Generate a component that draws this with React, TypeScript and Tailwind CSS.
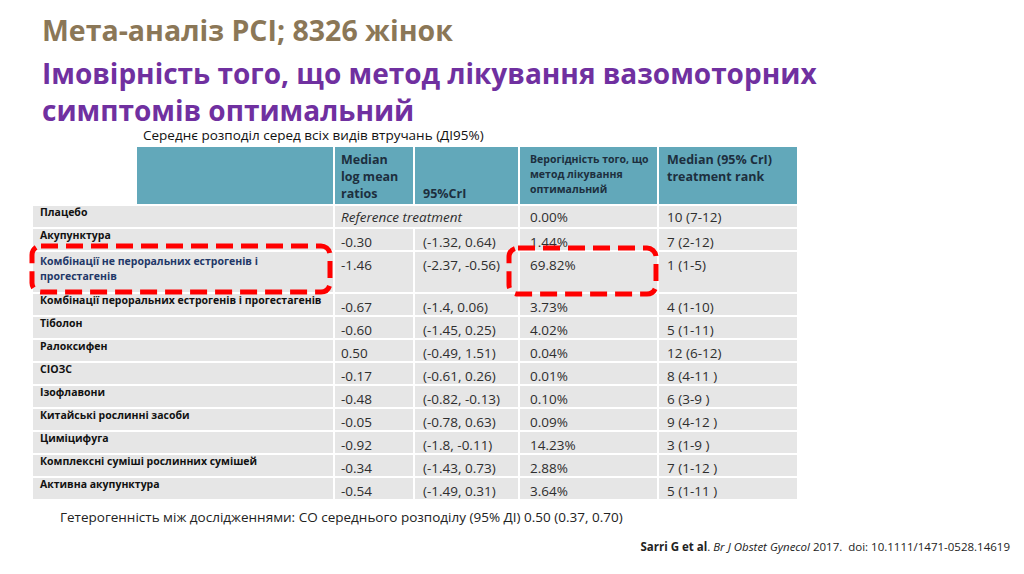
import React from 'react';

type Row = {
  label: string;
  median: string;
  cri: string;
  prob: string;
  rank: string;
  tall?: boolean;
  accent?: boolean;
  italic?: boolean;
};

const rows: Row[] = [
  { label: 'Плацебо', median: 'Reference treatment', cri: '', prob: '0.00%', rank: '10 (7-12)', italic: true },
  { label: 'Акупунктура', median: '-0.30', cri: '(-1.32, 0.64)', prob: '1.44%', rank: '7 (2-12)' },
  {
    label: 'Комбінації не пероральних естрогенів і прогестагенів',
    median: '-1.46',
    cri: '(-2.37, -0.56)',
    prob: '69.82%',
    rank: '1 (1-5)',
    tall: true,
    accent: true,
  },
  { label: 'Комбінації пероральних естрогенів і прогестагенів', median: '-0.67', cri: '(-1.4, 0.06)', prob: '3.73%', rank: '4 (1-10)' },
  { label: 'Тіболон', median: '-0.60', cri: '(-1.45, 0.25)', prob: '4.02%', rank: '5 (1-11)' },
  { label: 'Ралоксифен', median: '0.50', cri: '(-0.49, 1.51)', prob: '0.04%', rank: '12 (6-12)' },
  { label: 'СІОЗС', median: '-0.17', cri: '(-0.61, 0.26)', prob: '0.01%', rank: '8 (4-11 )' },
  { label: 'Ізофлавони', median: '-0.48', cri: '(-0.82, -0.13)', prob: '0.10%', rank: '6 (3-9 )' },
  { label: 'Китайські рослинні засоби', median: '-0.05', cri: '(-0.78, 0.63)', prob: '0.09%', rank: '9 (4-12 )' },
  { label: 'Циміцифуга', median: '-0.92', cri: '(-1.8, -0.11)', prob: '14.23%', rank: '3 (1-9 )' },
  { label: 'Комплексні суміші рослинних сумішей', median: '-0.34', cri: '(-1.43, 0.73)', prob: '2.88%', rank: '7 (1-12 )' },
  { label: 'Активна акупунктура', median: '-0.54', cri: '(-1.49, 0.31)', prob: '3.64%', rank: '5 (1-11 )' },
];

function DashedBox({ w, h }: { w: number; h: number }) {
  return (
    <svg width={w} height={h} viewBox={`0 0 ${w} ${h}`} className="block">
      <rect
        x={3}
        y={3}
        width={w - 6}
        height={h - 6}
        rx={9}
        fill="none"
        stroke="#ff0000"
        strokeWidth={5}
        strokeDasharray="17 8"
      />
    </svg>
  );
}

export default function App() {
  return (
    <div className="relative w-[1024px] h-[574px] overflow-hidden bg-white font-['Open_Sans',sans-serif]">
      {/* заголовок */}
      <div className="pl-[42px] pt-[10px] font-bold text-[28px] leading-[40px]">
        <h1 className="text-[#8b7757] text-[28.5px]">Мета-аналіз PCI; 8326 жінок</h1>
        <h2 className="text-[#7030a0] mt-[3px]">Імовірність того, що метод лікування вазомоторних</h2>
        <h2 className="text-[#7030a0] mt-[1px] leading-[32px]">симптомів оптимальний</h2>
      </div>
      <p className="pl-[143px] mt-[1px] text-[13.5px] leading-[16px] text-[#111]">
        Середнє розподіл серед всіх видів втручань (ДІ95%)
      </p>

      {/* таблиця */}
      <div className="ml-[33px] mt-[4px] w-[764px] grid grid-cols-[300px_78px_103px_137px_138px] gap-[2px] text-[#2e2e2e]">
        <div className="h-[57px] pl-[104px]">
          <div className="h-full bg-[#62a8ba]" />
        </div>
        <div className="h-[57px] bg-[#62a8ba] px-[6px] pt-[4px] text-[12.5px] leading-[17px] font-bold text-[#1d2f3e]">
          Median log mean ratios
        </div>
        <div className="h-[57px] bg-[#62a8ba] px-[8px] pb-[2px] flex items-end text-[12.5px] leading-[17px] font-bold text-[#1d2f3e]">
          95%CrI
        </div>
        <div className="h-[57px] bg-[#62a8ba] pl-[10px] pr-[3px] pt-[5px] text-[10.5px] leading-[15px] font-bold text-[#1d2f3e]">
          Верогідність того, що метод лікування оптимальний
        </div>
        <div className="h-[57px] bg-[#62a8ba] px-[8px] pt-[4px] text-[12.5px] leading-[17px] font-bold text-[#1d2f3e]">
          Median (95% CrI) treatment rank
        </div>

        {rows.map((r) => {
          const h = r.tall ? 'h-[40px]' : 'h-[21px]';
          const pt = r.italic ? 'pt-[2px]' : 'pt-[4px]';
          return (
            <React.Fragment key={r.label}>
              <div
                className={`${h} bg-[#e6e6e6] px-[7px] text-[10.5px] font-bold ${
                  r.accent ? 'pt-[2px] leading-[15px] text-[#1f3868]' : 'leading-[13px] text-[#111]'
                }`}
              >
                {r.label}
              </div>
              {r.italic ? (
                <div className={`${h} col-span-2 bg-[#e6e6e6] px-[6px] ${pt} text-[13.5px] leading-[18px] italic`}>
                  {r.median}
                </div>
              ) : (
                <>
                  <div className={`${h} bg-[#e6e6e6] px-[6px] ${pt} text-[13.5px] leading-[18px]`}>{r.median}</div>
                  <div className={`${h} bg-[#e6e6e6] px-[8px] ${pt} text-[13.5px] leading-[18px]`}>{r.cri}</div>
                </>
              )}
              <div className={`${h} bg-[#e6e6e6] px-[10px] ${pt} text-[13.5px] leading-[18px]`}>{r.prob}</div>
              <div className={`${h} bg-[#e6e6e6] px-[8px] ${pt} text-[13.5px] leading-[18px]`}>{r.rank}</div>
            </React.Fragment>
          );
        })}
      </div>

      {/* примітки */}
      <p className="pl-[60px] mt-[9px] text-[13.5px] leading-[18px] text-[#222]">
        Гетерогенність між дослідженнями: СО середнього розподілу (95% ДІ) 0.50 (0.37, 0.70)
      </p>
      <p className="mt-[13px] pr-[14px] text-right text-[11.5px] leading-[16px] text-[#222]">
        <span className="font-bold">Sarri G et al</span>. <span className="italic">Br J Obstet Gynecol</span> 2017.&nbsp; doi: 10.1111/1471-0528.14619
      </p>

      {/* червоні рамки */}
      <div className="absolute left-[29px] top-[243px]">
        <DashedBox w={304} h={52} />
      </div>
      <div className="absolute left-[506px] top-[245px]">
        <DashedBox w={153} h={52} />
      </div>
    </div>
  );
}
